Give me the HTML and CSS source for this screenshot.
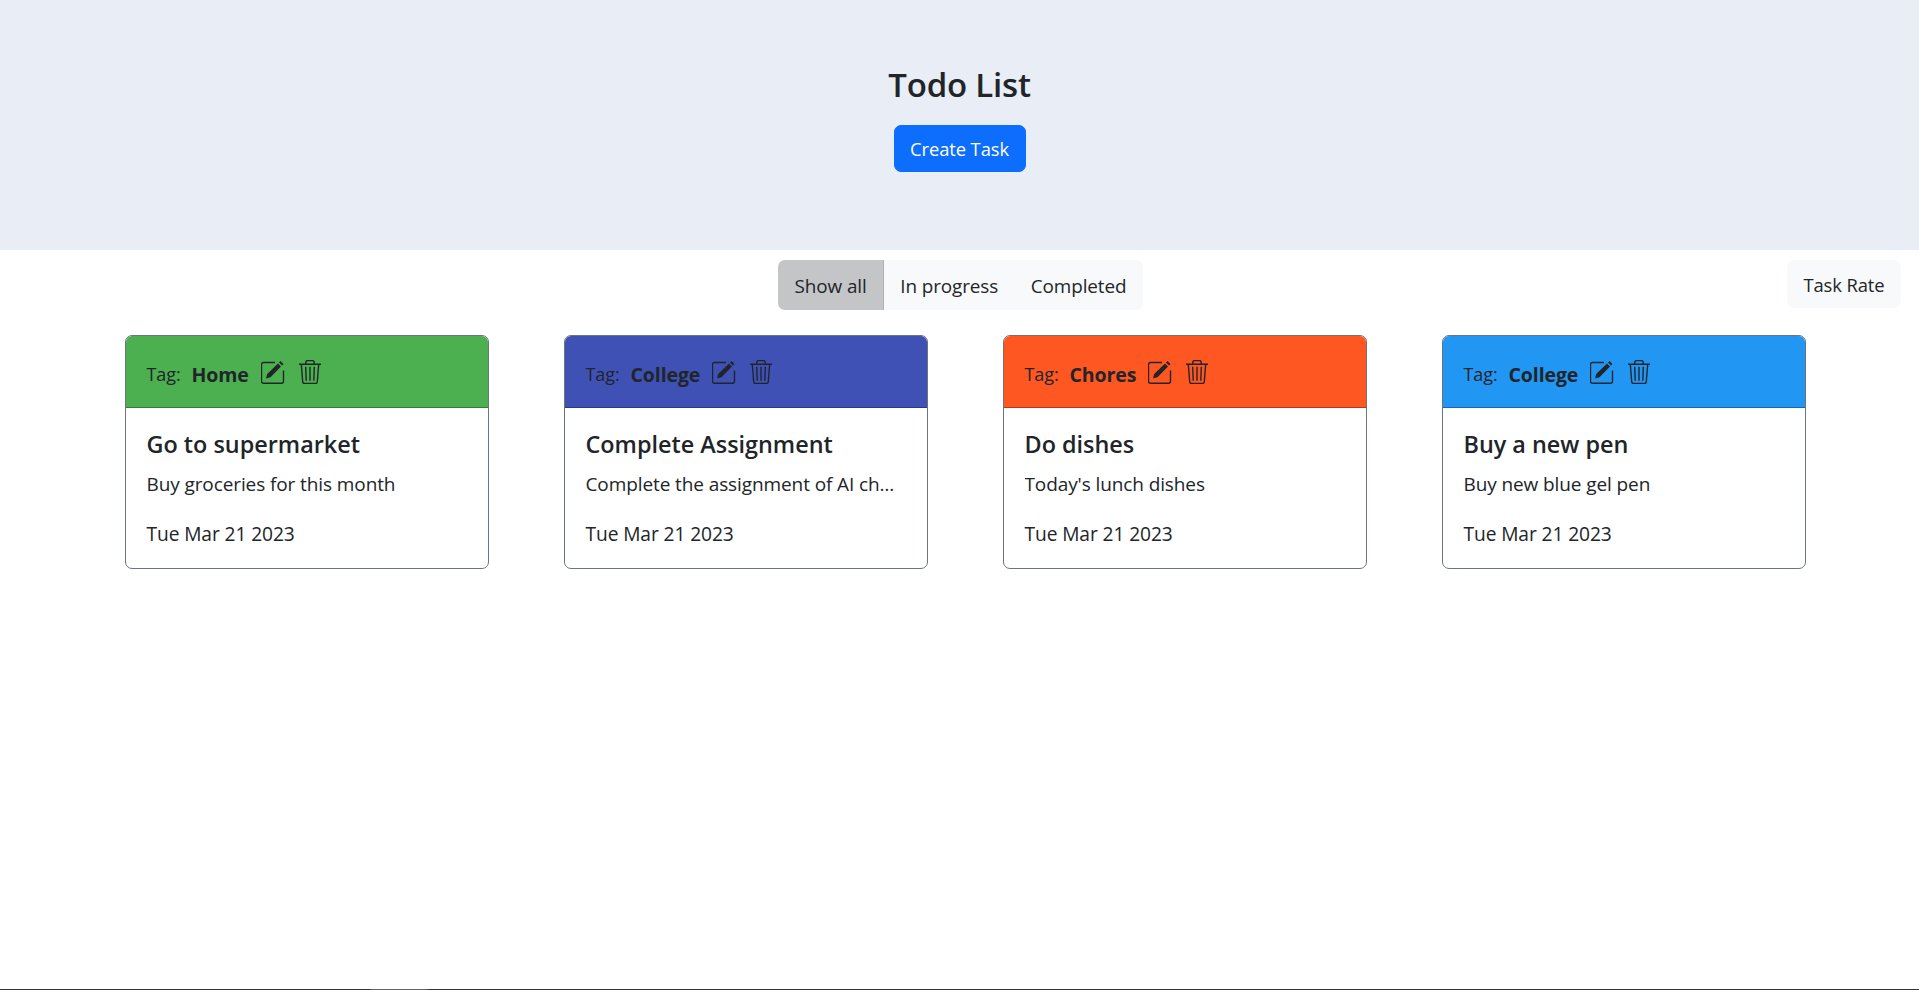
FILE: index.html
```html
<!DOCTYPE html>
<html>
  <head>
    <title>Todo List</title>
    <link rel="stylesheet" href="styles.css">
  </head>

  <body>
    <svg class="icon-defs">
      <symbol id="edit" viewBox="0 0 24 24">
        <path class="line" d="M14 2.500H2.500a2 2 0 0 0-2 2v16.800a2 2 0 0 0 2 2h18a2 2 0 0 0 2-2V10.500"/>
        <path class="solid" d="M5 18.500l1.200-4.500L17 3.500l3 3L9.500 17.300zM18 2.500L19.500 1l3 3L21 5.500z"/>
      </symbol>
      <symbol id="trash" viewBox="0 0 24 24">
        <path class="line" d="M1 4.300h22M7.800 4.300V2.500a2 2 0 0 1 2-2h4.400a2 2 0 0 1 2 2v1.800M3.300 4.300l1.400 17.400a2 2 0 0 0 2 1.800h10.600a2 2 0 0 0 2-1.800l1.400-17.400M7.700 6.700l.5 14M12 6.700v14M16.300 6.700l-.5 14"/>
      </symbol>
    </svg>

    <header class="hero">
      <h1>Todo List</h1>
      <button class="btn-create" type="button">Create Task</button>
    </header>

    <div class="toolbar">
      <nav class="filters">
        <a class="filter active">Show all</a>
        <a class="filter">In progress</a>
        <a class="filter">Completed</a>
      </nav>
      <a class="rate">Task Rate</a>
    </div>

    <main class="cards">
      <article class="card">
        <div class="card-head green">
          <span class="tag-label">Tag:</span>
          <b class="tag-name">Home</b>
          <svg class="icon icon-edit"><use href="#edit"/></svg>
          <svg class="icon"><use href="#trash"/></svg>
        </div>
        <div class="card-body">
          <h2>Go to supermarket</h2>
          <p class="desc">Buy groceries for this month</p>
          <p class="date">Tue Mar 21 2023</p>
        </div>
      </article>

      <article class="card">
        <div class="card-head indigo">
          <span class="tag-label">Tag:</span>
          <b class="tag-name">College</b>
          <svg class="icon icon-edit"><use href="#edit"/></svg>
          <svg class="icon"><use href="#trash"/></svg>
        </div>
        <div class="card-body">
          <h2>Complete Assignment</h2>
          <p class="desc">Complete the assignment of AI chapter four</p>
          <p class="date">Tue Mar 21 2023</p>
        </div>
      </article>

      <article class="card">
        <div class="card-head orange">
          <span class="tag-label">Tag:</span>
          <b class="tag-name">Chores</b>
          <svg class="icon icon-edit"><use href="#edit"/></svg>
          <svg class="icon"><use href="#trash"/></svg>
        </div>
        <div class="card-body">
          <h2>Do dishes</h2>
          <p class="desc">Today's lunch dishes</p>
          <p class="date">Tue Mar 21 2023</p>
        </div>
      </article>

      <article class="card">
        <div class="card-head blue">
          <span class="tag-label">Tag:</span>
          <b class="tag-name">College</b>
          <svg class="icon icon-edit"><use href="#edit"/></svg>
          <svg class="icon"><use href="#trash"/></svg>
        </div>
        <div class="card-body">
          <h2>Buy a new pen</h2>
          <p class="desc">Buy new blue gel pen</p>
          <p class="date">Tue Mar 21 2023</p>
        </div>
      </article>
    </main>

    <div class="bottom-line"></div>
  </body>
</html>
```

FILE: styles.css
```css
html, body
{
  height: 100%;
}

body
{
  font-family: "Open Sans", "Noto Sans", sans-serif;
  font-size: 19.2px;
  letter-spacing: -0.1px;
  color: #212529;
  margin: 0;
  display: flex;
  flex-direction: column;
  background-color: #fff;
  overflow: hidden;
}

.icon-defs
{
  display: none;
}

.hero
{
  height: 250px;
  flex: none;
  background-color: #e9edf6;
  display: flex;
  flex-direction: column;
  align-items: center;
  padding-top: 65px;
  box-sizing: border-box;
}

.hero h1
{
  margin: 0 0 20px;
  font-size: 33px;
  line-height: 40px;
  font-weight: 600;
  letter-spacing: -0.2px;
}

.btn-create
{
  width: 132px;
  height: 47px;
  padding: 0;
  border: 1px solid #0d6efd;
  border-radius: 7px;
  background-color: #0d6efd;
  color: #fff;
  font-family: inherit;
  font-size: 18.4px;
  letter-spacing: -0.1px;
}

.toolbar
{
  display: grid;
  grid-template-columns: 1fr auto 1fr;
  align-items: start;
  padding: 10px 18px 0 20px;
  flex: none;
}

.filters
{
  grid-column: 2;
  display: flex;
  height: 50px;
  background-color: #f8f9fa;
  border-radius: 7px;
  overflow: hidden;
  font-size: 18.9px;
}

.filter
{
  display: flex;
  align-items: center;
  padding: 1px 16.300px 0;
}

.filter.active
{
  background-color: #c4c5c7;
  border-right: 1px solid #b0b1b3;
}

.rate
{
  grid-column: 3;
  justify-self: end;
  height: 48px;
  display: flex;
  align-items: center;
  padding: 1px 16.500px 0;
  box-sizing: border-box;
  background-color: #f8f9fa;
  border-radius: 7px;
  font-size: 18.4px;
}

.cards
{
  display: grid;
  grid-template-columns: repeat(4, 364px);
  column-gap: 75px;
  padding: 25px 0 0 125px;
}

.card
{
  border: 1px solid #6c757d;
  border-radius: 7px;
  overflow: hidden;
  height: 234px;
  box-sizing: border-box;
}

.card-head
{
  height: 72px;
  box-sizing: border-box;
  padding: 5px 20.500px 0;
  display: flex;
  align-items: center;
  border-bottom: 1px solid rgba(0, 0, 0, 0.3);
}

.green { background-color: #4caf50; }
.indigo { background-color: #3f51b5; }
.orange { background-color: #ff5722; }
.blue { background-color: #2196f3; }

.tag-label
{
  margin-right: 11px;
  font-size: 18px;
}

.tag-name
{
  font-size: 19.500px;
  font-weight: 700;
  margin-right: 12px;
}

.icon
{
  width: 24px;
  height: 24px;
  flex: none;
  margin-top: -5px;
}

.icon-edit
{
  margin-right: 13px;
}

.line
{
  fill: none;
  stroke: #212529;
  stroke-width: 1.4;
}

.solid
{
  fill: #212529;
}

.card-body
{
  padding: 20px 20.500px 0;
}

.card-body h2
{
  margin: 0 0 10px;
  font-size: 23.400px;
  line-height: 32px;
  font-weight: 600;
  letter-spacing: 0;
}

.desc
{
  margin: 0 6px 22px 0;
  line-height: 28px;
  font-size: 19px;
  white-space: nowrap;
  overflow: hidden;
  text-overflow: ellipsis;
}

.date
{
  margin: 0;
  line-height: 28px;
}

.bottom-line
{
  margin-top: auto;
  height: 1px;
  flex: none;
  background: linear-gradient(to right, #333 370px, #666 372px, #666 425px, #333 430px);
}
```
